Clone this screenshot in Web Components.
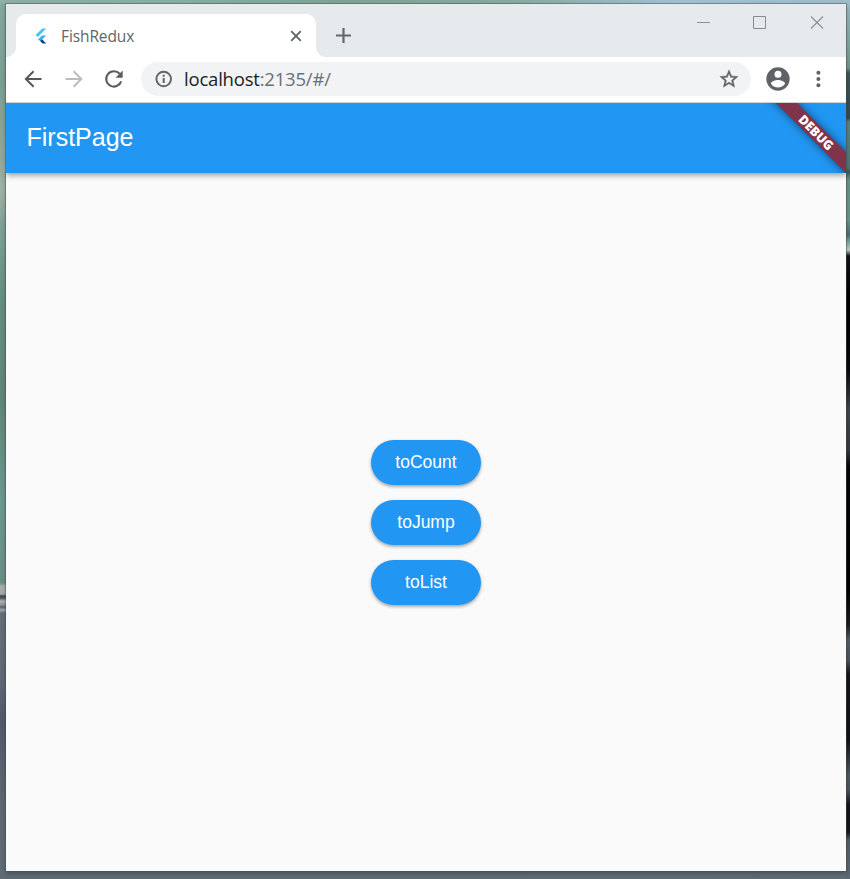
<!DOCTYPE html>
<html lang="en">
<head>
<meta charset="utf-8">
<title>FishRedux</title>
<style>
html, body { margin: 0; height: 100%; overflow: hidden; }
</style>
</head>
<body>
<desk-top>
  <browser-window>
    <tab-strip slot="tabs"><browser-tab>FishRedux</browser-tab></tab-strip>
    <tool-bar slot="toolbar"><span slot="host">localhost</span>:2135/#/</tool-bar>
    <app-bar>FirstPage</app-bar>
    <button-column>
      <pill-button>toCount</pill-button>
      <pill-button>toJump</pill-button>
      <pill-button>toList</pill-button>
    </button-column>
  </browser-window>
</desk-top>
<script>
function define(name, html) {
  const template = document.createElement('template');
  template.innerHTML = html;
  customElements.define(name, class extends HTMLElement {
    constructor() {
      super();
      this.attachShadow({ mode: 'open' }).append(template.content.cloneNode(true));
    }
  });
}

define('desk-top', `
<style>
:host {
  display: block; box-sizing: border-box; width: 850px; height: 879px; padding: 4px 4px 8px 6px;
  background:
    linear-gradient(90deg, #8db0a9, #86b0a0 20%, #7da596 40%, #86ac9f 60%, #9fc3d6 80%, #9fbcc9) 0 0 / 850px 4px no-repeat,
    linear-gradient(#84aaa0 0, #7ba095 80px, #93a89c 160px, #a2b4a6 190px, #7fa397 225px, #668f84 300px, #628779 400px, #6c9990 500px, #6b9088 583px, #a9b1ab 586px, #a5aca8 594px, #3f4a52 596px, #4b565e 598px, #b0b6b4 601px, #8b9393 605px, #59656c 607px, #a5adad 610px, #667078 613px, #606975 680px, #535b68 720px, #5e6873 800px, #606b76) 0 0 / 6px 879px no-repeat,
    linear-gradient(#9dbbc8 0, #81a89f 45px, #6f968b 68px, #3f5558 73px, #34494f 118px, #5b8580 122px, #4f7474 168px, #3e5859 172px, #699487 180px, #6a958a 220px, #4f6b72 235px, #6c9d96 240px, #c6cdc9 250px, #101216 256px, #000 300px, #08090c 370px, #40464d 410px, #353a41 450px, #050608 466px, #000 590px, #1a1d21 625px, #535d66 640px, #4b555e 660px, #14161a 674px, #101115 740px, #4d5861 775px, #4b555f 790px, #121319 805px, #15171c 832px, #505d68 840px, #5c6873) 846px 0 / 4px 879px no-repeat,
    linear-gradient(90deg, #5e6974, #616b74) 0 871px / 850px 8px no-repeat;
}
</style><slot></slot>`);

define('browser-window', `
<style>
:host {
  display: flex; flex-direction: column; height: 867px; background: #fafafa;
  box-shadow: 0 0 0 1px rgba(70,80,83,.45), 0 2px 5px rgba(0,0,0,.28);
}
main { flex: 1; min-height: 0; display: flex; flex-direction: column; overflow: hidden; }
</style>
<slot name="tabs"></slot><slot name="toolbar"></slot><main><slot></slot></main>`);

define('tab-strip', `
<style>
:host { display: flex; height: 53px; box-sizing: border-box; padding: 10px 0 0 10px; background: #e6eaed; }
svg { display: block; }
.plus { margin: 13px 0 0 19px; }
.controls { display: flex; gap: 43px; margin: 2px 22px 0 auto; }
.controls svg:last-child { margin-left: 1px; }
</style>
<slot></slot>
<svg class="plus" width="17" height="17" viewBox="0 0 17 17" fill="none" stroke="#5f686a" stroke-width="2.2"><path d="M8.5 1v15M1 8.5h15"/></svg>
<div class="controls">
  <svg width="13" height="14" viewBox="0 0 13 14" fill="none" stroke="#8a9295"><path d="M0 6.5h13"/></svg>
  <svg width="13" height="14" viewBox="0 0 13 14" fill="none" stroke="#838c8f"><path d="M.5.5h12v12H.5z"/></svg>
  <svg width="14" height="14" viewBox="0 0 14 14" fill="none" stroke="#899194" stroke-width="1.1"><path d="M1 .5l12 12M13 .5l-12 12"/></svg>
</div>`);

define('browser-tab', `
<style>
:host {
  position: relative; display: flex; align-items: center; box-sizing: border-box; width: 300px; height: 43px;
  padding: 0 14px 0 18px; background: #fff; border-radius: 10px 10px 0 0;
  font: 15.5px "Open Sans", "Noto Sans", sans-serif; letter-spacing: -.1px; color: #5f6568;
}
:host::before, :host::after { content: ""; position: absolute; bottom: 0; width: 10px; height: 10px; }
:host::before { left: -10px; background: radial-gradient(circle at 0 0, transparent 9.6px, #fff 10.3px); }
:host::after { right: -10px; background: radial-gradient(circle at 100% 0, transparent 9.6px, #fff 10.3px); }
svg { display: block; }
.label { margin-left: 13px; flex: 1; }
</style>
<svg width="14" height="16" viewBox="0 0 14 16">
  <path fill="#45c3f7" d="M8.4 .4H12.2L3.8 9 1.6 7z"/>
  <path fill="#3aaee9" d="M8 7.4h4.2L7.9 11.5 10 13.8 7.8 14 4 11.4z"/>
  <path fill="#0b408c" d="M7.9 11.2L12.2 15.4H8.6L6.2 13z"/>
</svg>
<span class="label"><slot></slot></span>
<svg width="12" height="12" viewBox="0 0 12 12" fill="none" stroke="#5f6668" stroke-width="1.9"><path d="M1.2 1.2l9.6 9.6M10.8 1.2L1.2 10.8"/></svg>`);

define('tool-bar', `
<style>
:host { display: flex; align-items: center; box-sizing: border-box; height: 46px; padding: 0 16px 1px; background: #fff; border-bottom: 1px solid #cfd3d6; color: #5f6368; }
svg { display: block; flex: none; }
.nav { display: flex; gap: 16px; }
.omnibox { display: flex; align-items: center; box-sizing: border-box; width: 610px; height: 34px; margin-left: 15px; padding: 0 11px; border-radius: 18px; background: #f1f3f4; }
.url { flex: 1; margin-left: 8px; font: 18.5px/34px "Open Sans", "Noto Sans", sans-serif; letter-spacing: -.2px; color: #6b7073; }
::slotted(span) { color: #202124; }
.user { margin-left: 13px; }
.more { margin-left: auto; }
</style>
<div class="nav">
  <svg width="24" height="24" viewBox="0 0 24 24" fill="none" stroke="#54585c" stroke-width="2"><path d="M19.5 12H4.5M11.6 4.3L3.9 12l7.7 7.7"/></svg>
  <svg width="24" height="24" viewBox="0 0 24 24" fill="none" stroke="#babcbe" stroke-width="2"><path d="M3.5 12H19M11.6 4.3l7.7 7.7-7.7 7.7"/></svg>
  <svg width="24" height="24" viewBox="0 0 24 24"><path fill="none" stroke="#5a5e62" stroke-width="2.1" d="M19.2 14.4A7.7 7.7 0 1 1 17.7 6.8"/><path fill="#5a5e62" d="M20.7 3.6v7.2h-7.2z"/></svg>
</div>
<div class="omnibox">
  <svg width="24" height="24" viewBox="0 0 24 24"><circle cx="11.7" cy="12" r="7.3" fill="none" stroke="#5f6368" stroke-width="1.9"/><path fill="#5f6368" d="M10.7 7.8h2v1.9h-2zM10.7 11h2v5h-2z"/></svg>
  <span class="url"><slot name="host"></slot><slot></slot></span>
  <svg width="22" height="22" viewBox="0 0 24 24" fill="currentColor" stroke="currentColor" stroke-width=".4"><path d="M22 9.24l-7.19-.62L12 2 9.19 8.63 2 9.24l5.46 4.73L5.82 21 12 17.27 18.18 21l-1.63-7.03L22 9.24zM12 15.4l-3.76 2.27 1-4.28-3.32-2.88 4.38-.38L12 6.1l1.71 4.04 4.38.38-3.32 2.88 1 4.28L12 15.4z"/></svg>
</div>
<svg class="user" width="28" height="28" viewBox="0 0 24 24" fill="currentColor"><path d="M12 2a10 10 0 1 0 0 20 10 10 0 0 0 0-20zm0 3a3 3 0 1 1 0 6 3 3 0 0 1 0-6zm0 14.2a7.2 7.2 0 0 1-6-3.22c.03-1.99 4-3.08 6-3.08 1.99 0 5.97 1.09 6 3.08a7.2 7.2 0 0 1-6 3.22z"/></svg>
<svg class="more" width="24" height="24" viewBox="0 0 24 24" fill="currentColor"><circle cx="12.4" cy="5.8" r="2"/><circle cx="12.4" cy="12" r="2"/><circle cx="12.4" cy="18.2" r="2"/></svg>`);

define('app-bar', `
<style>
:host {
  position: relative; display: flex; align-items: center; flex: none; box-sizing: border-box; height: 70px; padding: 0 20px 2px 20.5px;
  background: #2196f3; color: #fff; font: 25px "Liberation Sans", Arial, sans-serif;
  box-shadow: 0 2px 5px rgba(0,0,0,.3), 0 4px 6px rgba(0,0,0,.09);
}
.corner { position: absolute; top: 0; right: 0; width: 84px; height: 70px; overflow: hidden; }
.ribbon {
  position: absolute; left: -6px; top: 22px; width: 120px; height: 15px; transform: rotate(45deg);
  background: #80334b; box-shadow: 0 0 8px rgba(0,0,0,.5); text-align: center;
  font: 800 12.75px/15px "Open Sans", "Noto Sans", sans-serif; letter-spacing: -.1px;
}
</style>
<slot></slot><div class="corner"><div class="ribbon">DEBUG</div></div>`);

define('button-column', `
<style>
:host { flex: 1; display: flex; flex-direction: column; justify-content: center; align-items: center; gap: 15px; }
</style><slot></slot>`);

define('pill-button', `
<style>
:host {
  display: flex; justify-content: center; align-items: center; box-sizing: border-box; width: 110px; height: 45px; padding-top: 1px;
  border-radius: 23px; background: #2196f3; color: #fff; font: 17.5px "Liberation Sans", Arial, sans-serif;
  box-shadow: 0 2px 3px rgba(0,0,0,.24), 0 1px 4px rgba(0,0,0,.12);
}
</style><slot></slot>`);
</script>
</body>
</html>
